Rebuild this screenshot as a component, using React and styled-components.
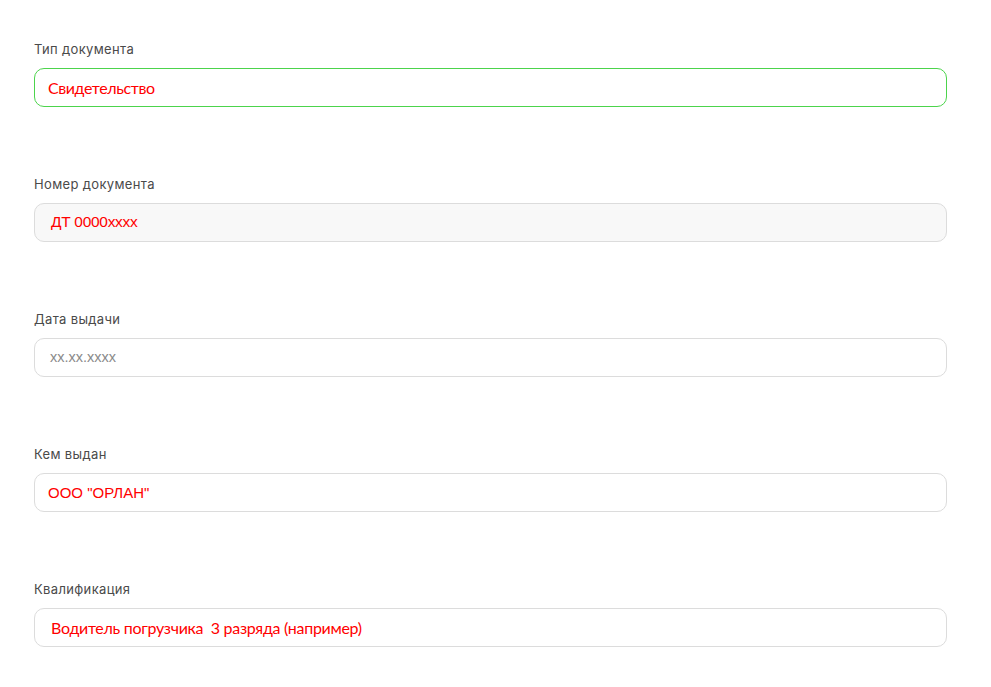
import React from "react";
import styled, { createGlobalStyle } from "styled-components";

const Global = createGlobalStyle`
  html, body { margin: 0; padding: 0; background: #fff; }
  body { font-family: "Inter", "Noto Sans", sans-serif; }
`;

const Form = styled.div`
  display: flex;
  flex-direction: column;
  gap: 68px;
  padding: 40px 44px 0 34px;
  width: 913px;
`;

const Field = styled.div`
  display: flex;
  flex-direction: column;
  gap: 10px;
`;

const Label = styled.label`
  font-family: "Inter", "Noto Sans", sans-serif;
  font-size: 13px;
  line-height: 18px;
  color: #4a4a4a;
  letter-spacing: 0.35px;
`;

const Box = styled.div`
  box-sizing: border-box;
  height: 39px;
  border-radius: 10px;
  border: ${(p) => (p.$active ? "1.5px solid #4cd44c" : "1px solid #dcdcdc")};
  background: ${(p) => p.$bg || "#fff"};
  display: flex;
  align-items: center;
  padding-left: ${(p) => p.$pad || 14}px;
  padding-bottom: 1px;
  white-space: pre;
  font-family: ${(p) => p.$font || '"Lato", sans-serif'};
  font-size: ${(p) => p.$size || 15}px;
  letter-spacing: ${(p) => p.$ls || 0}px;
  color: ${(p) => (p.$placeholder ? "#8a8a8a" : "#ff0000")};
`;

const fields = [
  { label: "Тип документа", value: "Свидетельство", active: true, pad: 13, font: '"Lato", "Noto Sans", sans-serif', size: 16, ls: -0.4 },
  { label: "Номер документа", value: "ДТ 0000xxxx", bg: "#f8f8f8", pad: 16, font: '"Liberation Sans", Arial, sans-serif', size: 15.5, ls: -0.3 },
  { label: "Дата выдачи", value: "xx.xx.xxxx", placeholder: true, pad: 15, font: '"Liberation Sans", Arial, sans-serif', size: 14.5 },
  { label: "Кем выдан", value: 'ООО "ОРЛАН"', pad: 13, font: '"Liberation Sans", Arial, sans-serif', size: 15 },
  { label: "Квалификация", value: "Водитель погрузчика  3 разряда (например)", pad: 16, font: '"Lato", "Noto Sans", sans-serif', size: 16, ls: -0.3 },
];

export default function App() {
  return (
    <>
      <Global />
      <Form>
        {fields.map((f) => (
          <Field key={f.label}>
            <Label>{f.label}</Label>
            <Box
              $active={f.active}
              $bg={f.bg}
              $pad={f.pad}
              $font={f.font}
              $size={f.size}
              $ls={f.ls}
              $placeholder={f.placeholder}
            >
              {f.value}
            </Box>
          </Field>
        ))}
      </Form>
    </>
  );
}
